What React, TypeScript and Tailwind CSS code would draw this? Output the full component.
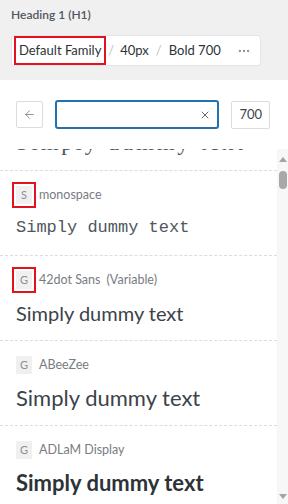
import React from "react";
import { ArrowLeft, X, Ellipsis } from "lucide-react";

type Item = {
  badge: string;
  name: string;
  variable?: boolean;
  sampleClass: string;
  marked?: boolean;
  first?: boolean;
};

const items: Item[] = [
  {
    badge: "G",
    name: "serif",
    sampleClass: "font-['Liberation_Serif',serif] text-[23px] tracking-[0.12em] text-[#50575e]",
    first: true,
  },
  {
    badge: "S",
    name: "monospace",
    sampleClass: "font-['Liberation_Mono',monospace] text-[17px] text-[#50575e]",
    marked: true,
  },
  {
    badge: "G",
    name: "42dot Sans",
    variable: true,
    sampleClass: "text-[20px] text-[#3c434a]",
    marked: true,
  },
  {
    badge: "G",
    name: "ABeeZee",
    sampleClass: "text-[22px] text-[#3c434a]",
  },
  {
    badge: "G",
    name: "ADLaM Display",
    sampleClass: "text-[22px] font-bold text-[#2c3338]",
  },
  {
    badge: "G",
    name: "Abel",
    sampleClass: "text-[20px] text-[#3c434a]",
  },
];

function FontRow({ item }: { item: Item }) {
  return (
    <div
      className={
        "border-b border-dashed border-[#dcdcde] px-[16px] pt-[15px] pb-[12px] " +
        (item.first ? "mt-[-63px]" : "")
      }
    >
      <div className="flex items-center h-[18px]">
        <div
          className={
            "w-[16px] h-[18px] bg-[#f0f0f1] text-[11px] text-[#8c8f94] flex items-center justify-center " +
            (item.marked ? "outline-2 outline-[#e3121f] outline-offset-[2px]" : "")
          }
        >
          {item.badge}
        </div>
        <span className="ml-[7px] text-[12.5px] text-[#787c82]">{item.name}</span>
        {item.variable && (
          <span className="ml-[6px] text-[12.5px] text-[#787c82]">(Variable)</span>
        )}
      </div>
      <div className={"mt-[9px] h-[30px] leading-[30px] whitespace-nowrap " + item.sampleClass}>
        Simply dummy text
      </div>
    </div>
  );
}

export default function App() {
  return (
    <div className="w-[288px] h-[504px] overflow-hidden bg-white font-['Lato',sans-serif] flex flex-col">
      {/* Header */}
      <div className="bg-[#f0f0f1] h-[80px] px-[11px] pt-[7px] shrink-0">
        <div className="text-[12px] leading-[16px] font-semibold text-[#50575e]">
          Heading 1 (H1)
        </div>
        <div className="mt-[12px] w-[250px] h-[31px] bg-white border border-[#e2e4e7] rounded-[3px] flex items-center text-[13px] text-[#2c3338]">
          <div className="ml-[2px] h-[29px] border-2 border-[#e3121f] px-[3px] flex items-center whitespace-nowrap">
            Default Family
          </div>
          <span className="ml-[2px] text-[#c3c4c7]">/</span>
          <span className="ml-[6px]">40px</span>
          <span className="ml-[7px] text-[#c3c4c7]">/</span>
          <span className="ml-[7px]">Bold 700</span>
          <span className="ml-auto mr-[9px] text-[#8c8f94] flex items-center">
            <Ellipsis size={14} strokeWidth={2} />
          </span>
        </div>
      </div>

      {/* Search row */}
      <div className="pt-[20px] px-[16px] flex items-center shrink-0">
        <div className="w-[27px] h-[27px] border border-[#dcdcde] rounded-[2px] flex items-center justify-center text-[#787c82]">
          <ArrowLeft size={13} strokeWidth={1.5} />
        </div>
        <div className="ml-[12px] w-[164px] h-[29px] border-2 border-[#2271b1] rounded-[3px] flex items-center justify-end pr-[6px] text-[#50575e]">
          <X size={12} strokeWidth={1.8} />
        </div>
        <div className="ml-[12px] w-[39px] h-[28px] border border-[#dcdcde] rounded-[2px] flex items-center justify-end pr-[7px] text-[13px] text-[#3c434a]">
          700
        </div>
      </div>

      {/* List */}
      <div className="mt-[20px] flex flex-1 min-h-0">
        <div className="flex-1 overflow-hidden">
          {items.map((it, i) => (
            <FontRow key={i} item={it} />
          ))}
        </div>
        <div className="w-[11px] bg-[#f7f7f7] flex flex-col items-center">
          <div className="h-[20px] flex items-center justify-center">
            <svg width="8" height="5" viewBox="0 0 8 5">
              <polygon points="4,0 8,5 0,5" fill="#a3a3a3" />
            </svg>
          </div>
          <div className="mt-[2px] w-[8px] h-[18px] rounded-[4px] bg-[#a8a8a8]" />
          <div className="flex-1" />
          <div className="h-[10px] flex items-start justify-center">
            <svg width="8" height="5" viewBox="0 0 8 5">
              <polygon points="0,0 8,0 4,5" fill="#a3a3a3" />
            </svg>
          </div>
        </div>
      </div>
    </div>
  );
}
